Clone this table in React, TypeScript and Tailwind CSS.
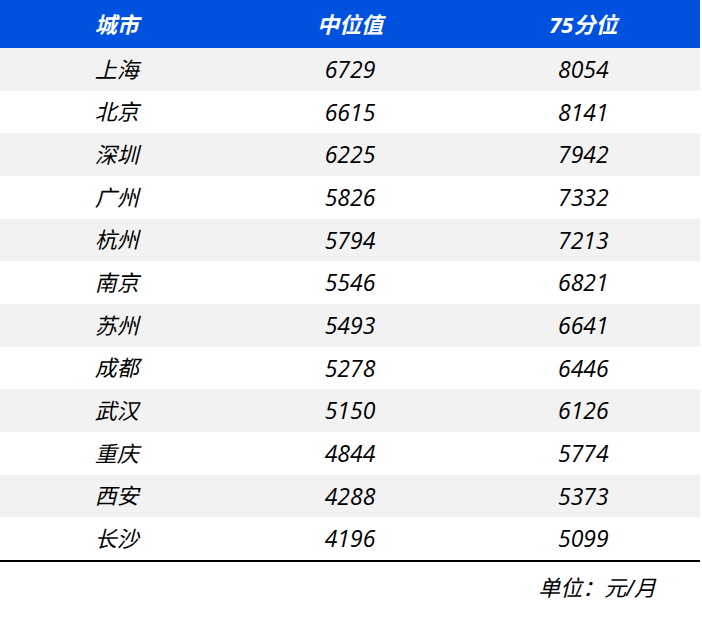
import React from "react";

const rows: [string, number, number][] = [
  ["上海", 6729, 8054],
  ["北京", 6615, 8141],
  ["深圳", 6225, 7942],
  ["广州", 5826, 7332],
  ["杭州", 5794, 7213],
  ["南京", 5546, 6821],
  ["苏州", 5493, 6641],
  ["成都", 5278, 6446],
  ["武汉", 5150, 6126],
  ["重庆", 4844, 5774],
  ["西安", 4288, 5373],
  ["长沙", 4196, 5099],
];

export default function App() {
  return (
    <div
      className="w-[702px] h-[617px] bg-white text-black italic"
      style={{ fontFamily: '"Open Sans", "Noto Sans CJK SC", sans-serif' }}
    >
      <div className="w-[700px]">
        <div className="grid grid-cols-3 h-[48px] bg-[#0052de] text-white font-bold text-[22px] items-center text-center">
          <div>城市</div>
          <div>中位值</div>
          <div>75分位</div>
        </div>
        {rows.map(([city, mid, p75], i) => (
          <div
            key={city}
            className={`grid grid-cols-3 h-[42.67px] items-center text-center ${
              i % 2 === 0 ? "bg-[#f2f2f2]" : "bg-white"
            }`}
          >
            <div className="text-[22px]">{city}</div>
            <div className="text-[23px]">{mid}</div>
            <div className="text-[23px]">{p75}</div>
          </div>
        ))}
        <div className="h-[2px] bg-black" />
        <div className="flex justify-end pr-[44px] pt-[9px] text-[22px]">
          单位：元/月
        </div>
      </div>
    </div>
  );
}
